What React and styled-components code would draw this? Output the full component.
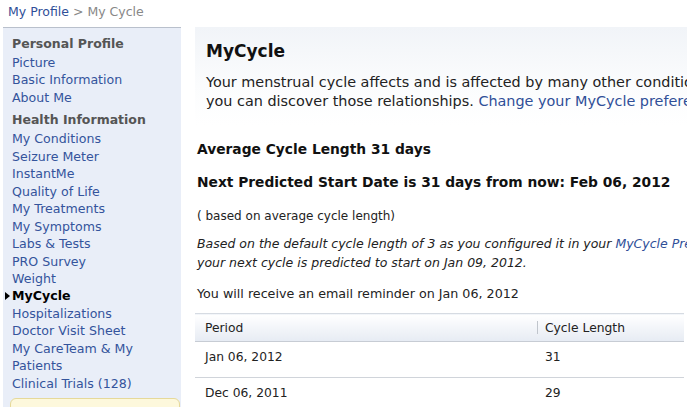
import React from 'react';
import styled, { createGlobalStyle } from 'styled-components';

const GlobalStyle = createGlobalStyle`
  html, body {
    margin: 0;
    padding: 0;
    background: #fff;
    overflow: hidden;
  }
  body {
    font-family: "DejaVu Sans", Verdana, sans-serif;
    color: #222;
  }
`;

const sections = [
  {
    title: 'Personal Profile',
    links: ['Picture', 'Basic Information', 'About Me']
  },
  {
    title: 'Health Information',
    links: [
      'My Conditions',
      'Seizure Meter',
      'InstantMe',
      'Quality of Life',
      'My Treatments',
      'My Symptoms',
      'Labs & Tests',
      'PRO Survey',
      'Weight',
      'MyCycle',
      'Hospitalizations',
      'Doctor Visit Sheet',
      'My CareTeam & My Patients',
      'Clinical Trials (128)'
    ]
  }
];

const periods = [
  { period: 'Jan 06, 2012', length: 31 },
  { period: 'Dec 06, 2011', length: 29 }
];

function App() {
  return (
    <Page>
      <GlobalStyle />
      <Breadcrumb>
        <CrumbLink>My Profile</CrumbLink> &gt; My Cycle
      </Breadcrumb>
      <Layout>
        <Sidebar>
          {sections.map((section) => (
            <Section key={section.title}>
              <SectionTitle>{section.title}</SectionTitle>
              {section.links.map((link) => (
                <NavItem key={link} active={link === 'MyCycle'}>{link}</NavItem>
              ))}
            </Section>
          ))}
          <NoteBox />
        </Sidebar>
        <Main>
          <Intro>
            <Title>MyCycle</Title>
            <IntroText>
              Your menstrual cycle affects and is affected by many other conditions, and with MyCycle
              <br />
              you can discover those relationships. <Link>Change your MyCycle preferences</Link>
            </IntroText>
          </Intro>
          <Stat>Average Cycle Length 31 days</Stat>
          <Stat>Next Predicted Start Date is 31 days from now: Feb 06, 2012</Stat>
          <Note>( based on average cycle length)</Note>
          <Italic>
            Based on the default cycle length of 3 as you configured it in your <Link>MyCycle Preferences</Link>,
            <br />
            your next cycle is predicted to start on Jan 09, 2012.
          </Italic>
          <Reminder>You will receive an email reminder on Jan 06, 2012</Reminder>
          <Table>
            <thead>
              <tr>
                <HeadCell>Period</HeadCell>
                <HeadCell divider>Cycle Length</HeadCell>
              </tr>
            </thead>
            <tbody>
              {periods.map((row) => (
                <tr key={row.period}>
                  <Cell>{row.period}</Cell>
                  <Cell narrow>{row.length}</Cell>
                </tr>
              ))}
            </tbody>
          </Table>
        </Main>
      </Layout>
    </Page>
  );
}

const Page = styled.div`
  width: 687px;
  height: 407px;
  overflow: hidden;
`;

const Breadcrumb = styled.div`
  font-size: 12.5px;
  color: #888;
  padding: 4px 0 0 8px;
  height: 27px;
  box-sizing: border-box;
`;

const CrumbLink = styled.span`
  color: #2f4f98;
`;

const Layout = styled.div`
  display: flex;
  align-items: flex-start;
  gap: 14px;
`;

const Sidebar = styled.div`
  width: 178px;
  margin-left: 3px;
  flex-shrink: 0;
  background: #e9eef8;
  border-top: 1px solid #b9c0cc;
  padding: 7px 0 0 9px;
  box-sizing: border-box;
  height: 400px;
`;

const Section = styled.div`
  margin-bottom: 5px;
`;

const SectionTitle = styled.div`
  font-size: 12.5px;
  font-weight: bold;
  color: #555;
  line-height: 18px;
  margin-bottom: 1px;
`;

const NavItem = styled.div`
  position: relative;
  font-size: 12.6px;
  line-height: 17.45px;
  color: ${(p) => (p.active ? '#000' : '#34549c')};
  font-weight: ${(p) => (p.active ? 'bold' : 'normal')};
  padding-right: 22px;

  &::before {
    content: ${(p) => (p.active ? "''" : 'none')};
    position: absolute;
    left: -7px;
    top: 5px;
    border-left: 5px solid #000;
    border-top: 4px solid transparent;
    border-bottom: 4px solid transparent;
  }
`;

const NoteBox = styled.div`
  margin-top: 6px;
  margin-left: -2px;
  width: 168px;
  height: 30px;
  background: #fdf8dc;
  border: 1px solid #e6d99a;
  border-radius: 6px;
`;

const Main = styled.div`
  flex: 1;
  min-width: 0;
  overflow: hidden;
  white-space: nowrap;
`;

const Intro = styled.div`
  background: linear-gradient(#f1f4f8, #fbfcfd 60%, #fff);
  padding: 14px 0 14px 11px;
  height: 98px;
  box-sizing: border-box;
`;

const Title = styled.h1`
  font-size: 17px;
  font-weight: bold;
  color: #111;
  margin: 0 0 12px;
`;

const IntroText = styled.p`
  margin: 0;
  font-size: 14.4px;
  line-height: 19px;
  color: #222;
`;

const Link = styled.span`
  color: #2f4f98;
`;

const Stat = styled.h2`
  font-size: 13.8px;
  font-weight: bold;
  color: #111;
  margin: 14px 0 0 2px;
  line-height: 19px;

  &:first-of-type {
    margin-top: 15px;
  }
`;

const Note = styled.p`
  font-size: 12px;
  color: #222;
  margin: 17px 0 0 2px;
`;

const Italic = styled.p`
  font-size: 12.5px;
  font-style: italic;
  color: #222;
  margin: 11px 0 0 2px;
  line-height: 19px;
`;

const Reminder = styled.p`
  font-size: 12.7px;
  color: #222;
  margin: 14px 0 0 2px;
`;

const Table = styled.table`
  margin-top: 12px;
  width: 489px;
  border-collapse: collapse;
  font-size: 12.3px;
`;

const HeadCell = styled.th`
  position: relative;
  text-align: left;
  font-weight: normal;
  color: #222;
  height: 27px;
  padding: 0 10px 0 ${(p) => (p.divider ? '8px' : '10px')};
  background: linear-gradient(#fff, #e6ebf3);
  border-top: 1px solid #d6dbe2;
  border-bottom: 1px solid #c7ccd4;
  width: ${(p) => (p.divider ? '129px' : 'auto')};

  &::before {
    content: ${(p) => (p.divider ? "''" : 'none')};
    position: absolute;
    left: 0;
    top: 7px;
    height: 13px;
    border-left: 1px solid #c0c5cc;
  }
`;

const Cell = styled.td`
  line-height: 17px;
  padding: 7px 10px 11px ${(p) => (p.narrow ? '8px' : '10px')};
  color: #222;
  border-bottom: 1px solid #d0d4da;
`;

export default App;
